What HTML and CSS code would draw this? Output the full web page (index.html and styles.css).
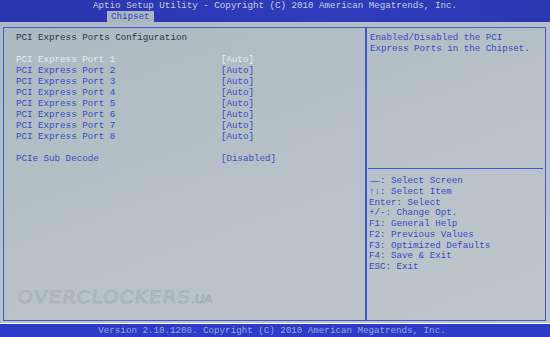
FILE: index.html
```html
<!DOCTYPE html>
<html lang="en">

<head>
    <meta charset="UTF-8">
    <meta name="viewport" content="width=device-width, initial-scale=1.0">
    <title>Aptio Setup Utility - Chipset</title>
    <link rel="stylesheet" href="styles.css">
</head>

<body>
    <div class="screen">

        <div class="topbar">
            <div class="title">Aptio Setup Utility - Copyright (C) 2010 American Megatrends, Inc.</div>
            <div class="tabs">
                <span class="tab active">Chipset</span>
            </div>
        </div>

        <div class="main">
            <div class="frame">
                <div class="left">
                    <div class="line heading">PCI Express Ports Configuration</div>
                    <div class="line"></div>

                    <div class="option selected"><span>PCI Express Port 1</span><span>[Auto]</span></div>
                    <div class="option"><span>PCI Express Port 2</span><span>[Auto]</span></div>
                    <div class="option"><span>PCI Express Port 3</span><span>[Auto]</span></div>
                    <div class="option"><span>PCI Express Port 4</span><span>[Auto]</span></div>
                    <div class="option"><span>PCI Express Port 5</span><span>[Auto]</span></div>
                    <div class="option"><span>PCI Express Port 6</span><span>[Auto]</span></div>
                    <div class="option"><span>PCI Express Port 7</span><span>[Auto]</span></div>
                    <div class="option"><span>PCI Express Port 8</span><span>[Auto]</span></div>
                    <div class="line"></div>
                    <div class="option"><span>PCIe Sub Decode</span><span>[Disabled]</span></div>

                    <div class="watermark">OVERCLOCKERS<small>.UA</small></div>
                </div>

                <div class="right">
                    <div class="help">
                        <div class="line">Enabled/Disabled the PCI</div>
                        <div class="line">Express Ports in the Chipset.</div>
                    </div>
                    <div class="keys">
                        <div class="key">→←: Select Screen</div>
                        <div class="key">↑↓: Select Item</div>
                        <div class="key">Enter: Select</div>
                        <div class="key">+/-: Change Opt.</div>
                        <div class="key">F1: General Help</div>
                        <div class="key">F2: Previous Values</div>
                        <div class="key">F3: Optimized Defaults</div>
                        <div class="key">F4: Save &amp; Exit</div>
                        <div class="key">ESC: Exit</div>
                    </div>
                </div>
            </div>
        </div>

        <div class="bottombar">Version 2.10.1208. Copyright (C) 2010 American Megatrends, Inc.</div>
    </div>
</body>

</html>
```

FILE: styles.css
```css
html,
body {
    margin: 0;
    padding: 0;
}

body {
    width: 550px;
    height: 337px;
    overflow: hidden;
    font-family: "Liberation Mono", "DejaVu Sans Mono", monospace;
    font-size: 9.2px;
    color: #3a4bc6;
}

.screen {
    display: flex;
    flex-direction: column;
    height: 337px;
}

/* Barra superiore */
.topbar {
    background: linear-gradient(to right, #2a36ae, #2e3cbc 60%, #2b38b2);
    height: 22px;
    display: flex;
    flex-direction: column;
}

.title {
    height: 11px;
    line-height: 11px;
    text-align: center;
    color: #c7cfe0;
}

.tabs {
    height: 11px;
    padding-left: 107px;
    display: flex;
}

.tab {
    display: block;
    padding: 0 4px;
    line-height: 11px;
    height: 11px;
}

.tab.active {
    background-color: #aab5c2;
    color: #3344c2;
}

/* Area principale */
.main {
    flex: 1;
    background: linear-gradient(160deg, #adb8c0, #b7c1c7 50%, #bcc6cb);
    padding: 5px 4px 2px 3px;
}

.frame {
    height: 100%;
    box-sizing: border-box;
    border: 1px solid #4656d2;
    display: grid;
    grid-template-columns: 363px 1fr;
}

.left {
    position: relative;
    padding: 4px 12px 0 12px;
    border-right: 2px solid #4252d4;
}

.line {
    height: 11px;
    line-height: 11px;
    white-space: pre;
}

.heading {
    color: #2e3350;
}

.option {
    display: grid;
    grid-template-columns: 205px 1fr;
    height: 11px;
    line-height: 11px;
}

.option.selected {
    color: #e6ecef;
}

.watermark {
    position: absolute;
    left: 15px;
    top: 259px;
    font-family: "DejaVu Sans", sans-serif;
    font-size: 17px;
    letter-spacing: 1.5px;
    color: #b9c3c8;
    -webkit-text-stroke: 0.5px #98a3a9;
    transform: skewX(-6deg) scaleX(1.12);
    transform-origin: left top;
}

.watermark small {
    font-size: 11px;
    letter-spacing: 0;
}

.right {
    display: flex;
    flex-direction: column;
}

.help {
    height: 136px;
    padding: 4px 0 0 2px;
    border-bottom: 1px solid #4656d2;
    margin-right: 2px;
    margin-left: 1px;
}

.keys {
    padding: 7px 0 0 2px;
}

.key {
    height: 10.75px;
    line-height: 10.75px;
    white-space: pre;
}

/* Barra inferiore */
.bottombar {
    background: #2c3cc6;
    height: 13px;
    line-height: 13px;
    text-align: center;
    color: #9aa6dc;
    margin-top: 1px;
    padding-right: 6px;
}
```
